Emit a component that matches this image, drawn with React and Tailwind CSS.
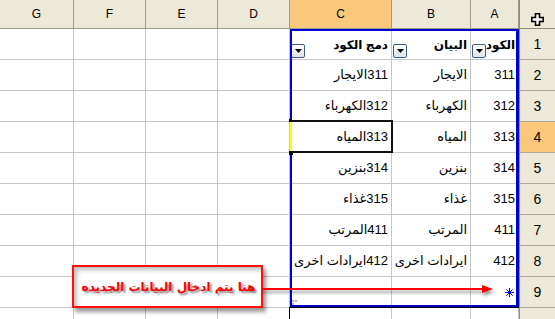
import React from 'react';

// Excel 2003 style RTL list sheet
const rows = [
  ['311', 'الايجار', '311الايجار'],
  ['312', 'الكهرباء', '312الكهرباء'],
  ['313', 'المياه', '313المياه'],
  ['314', 'بنزين', '314بنزين'],
  ['315', 'غذاء', '315غذاء'],
  ['411', 'المرتب', '411المرتب'],
  ['412', 'ايرادات اخرى', '412ايرادات اخرى'],
];

const grid = 'border-r border-b border-[#c6c6c6]';
const colHead = 'border-r border-b border-[#9d9a89] bg-[#ece9d8] flex items-center justify-center text-[12px] text-black';
const rowHead = 'border-l border-b border-l-[#8d8b7c] border-b-[#aca899] bg-[#ece9d8] flex items-center justify-center text-[14px] text-black';

function Text({ children, bold }) {
  return (
    <span dir="rtl" className={`whitespace-nowrap ${bold ? 'font-bold text-[12px]' : ''}`}>
      {children}
    </span>
  );
}

function DataCell({ children, bold, className = '' }) {
  return (
    <div className={`${grid} flex items-center justify-end pr-[3px] ${className}`}>
      {children != null && <Text bold={bold}>{children}</Text>}
    </div>
  );
}

function Dropdown() {
  return (
    <div className="absolute left-[1px] bottom-[1px] w-[14px] h-[14px] rounded-[2px] border border-[#3d5f84] bg-gradient-to-b from-white to-[#dde3ea] flex items-center justify-center">
      <svg width="7" height="4" viewBox="0 0 7 4">
        <path d="M0 0h7L3.5 4z" fill="#000" />
      </svg>
    </div>
  );
}

function HeadCell({ children }) {
  return (
    <div className={`${grid} relative flex items-start justify-end pr-[3px] pt-[7px]`}>
      <Text bold>{children}</Text>
      <Dropdown />
    </div>
  );
}

export default function App() {
  return (
    <div
      className="relative w-[555px] h-[319px] overflow-hidden bg-white text-[13px] text-black"
      style={{ fontFamily: '"Liberation Sans", "DejaVu Sans", sans-serif' }}
    >
      <div className="grid grid-cols-[74px_72px_72px_72px_102px_79px_48px_36px] grid-rows-[29px_repeat(10,31px)]">
        {/* column headers */}
        {['G', 'F', 'E', 'D'].map(l => (
          <div key={l} className={colHead}>{l}</div>
        ))}
        <div className={`${colHead} bg-[#f9c87b]`}>C</div>
        <div className={colHead}>B</div>
        <div className={colHead}>A</div>
        <div className="border-l border-b border-[#8d8b7c] bg-[#ece9d8] flex items-end justify-center pb-[2px]">
          <svg width="13" height="13" viewBox="0 0 13 13">
            <path d="M4.5 0.8h4v3.7h3.7v4H8.5v3.7h-4V8.5H0.8v-4h3.7z" fill="#fff" stroke="#000" strokeWidth="1.6" />
          </svg>
        </div>

        {/* row 1 : list headers */}
        <DataCell /><DataCell /><DataCell /><DataCell />
        <HeadCell>دمج الكود</HeadCell>
        <HeadCell>البيان</HeadCell>
        <HeadCell>الكود</HeadCell>
        <div className={rowHead}>1</div>

        {rows.map((r, i) => (
          <React.Fragment key={r[0]}>
            <DataCell /><DataCell /><DataCell /><DataCell />
            <DataCell>{r[2]}</DataCell>
            <DataCell>{r[1]}</DataCell>
            <DataCell>{r[0]}</DataCell>
            <div className={`${rowHead} ${i === 2 ? 'bg-[#f9c87b]' : ''}`}>{i + 2}</div>
          </React.Fragment>
        ))}

        {/* row 9 : new row */}
        <DataCell /><DataCell /><DataCell /><DataCell /><DataCell /><DataCell />
        <div className={`${grid} flex items-center justify-end pr-[4px]`}>
          <svg width="9" height="9" viewBox="0 0 9 9" stroke="#0000ff" strokeWidth="1">
            <path d="M4.5 0v9M0 4.5h9M1.3 1.3l6.4 6.4M7.7 1.3l-6.4 6.4" />
          </svg>
        </div>
        <div className={rowHead}>9</div>

        {/* row 10 */}
        <DataCell /><DataCell /><DataCell /><DataCell /><DataCell /><DataCell /><DataCell />
        <div className={`${rowHead} items-start pt-[6px]`}>10</div>
      </div>

      {/* list frame */}
      <div className="absolute left-[290px] top-[29px] w-[229px] h-[278px] border-2 border-r-[3px] border-[#0000cc]" />
      <div className="absolute left-[289px] top-[307px] w-[230px] h-px bg-black" />
      <div className="absolute left-[289px] top-[307px] w-px h-[12px] bg-black" />
      <div className="absolute left-[292px] top-[300px] w-[6px] h-[5px] flex flex-wrap gap-px">
        <span className="w-[2px] h-[2px] bg-[#bdb596]" />
        <span className="w-[2px] h-[2px] bg-[#bdb596]" />
        <span className="w-[2px] h-[2px] bg-[#bdb596]" />
      </div>

      {/* active cell */}
      <div className="absolute left-[290px] top-[120px] w-[103px] h-[33px] border-2 border-[#111]" />
      <div className="absolute left-[290px] top-[121px] w-[2px] h-[31px] bg-[#ffff00]" />
      <div className="absolute left-[289px] top-[119px] w-[3px] h-[3px] bg-black" />
      <div className="absolute left-[289px] top-[151px] w-[4px] h-[4px] bg-black" />

      {/* callout */}
      <div className="absolute left-[72px] top-[265px] w-[191px] h-[43px] bg-white border-2 border-[#ff1010] shadow-[3px_4px_4px_rgba(0,0,0,0.4),inset_3px_3px_4px_rgba(0,0,0,0.25)] flex items-center justify-center pl-[2px]">
        <span
          dir="rtl"
          className="text-[12px] font-bold text-[#ff0000] whitespace-nowrap [text-shadow:2px_2px_2px_rgba(0,0,0,0.45)]"
          style={{ fontFamily: '"DejaVu Sans", sans-serif' }}
        >
          هنا يتم ادخال البيانات الجديده
        </span>
      </div>
      <svg className="absolute left-[262px] top-[282px]" width="236" height="18" viewBox="0 0 236 18">
        <g opacity="0.4" style={{ filter: 'blur(1.5px)' }}>
          <path d="M0 10h222" stroke="#000" strokeWidth="2" />
          <path d="M222 6l10 4l-10 4z" fill="#000" />
        </g>
        <path d="M0 7h222" stroke="#ff0000" strokeWidth="2" />
        <path d="M220 3l11 4l-11 4z" fill="#ff0000" />
      </svg>
    </div>
  );
}
